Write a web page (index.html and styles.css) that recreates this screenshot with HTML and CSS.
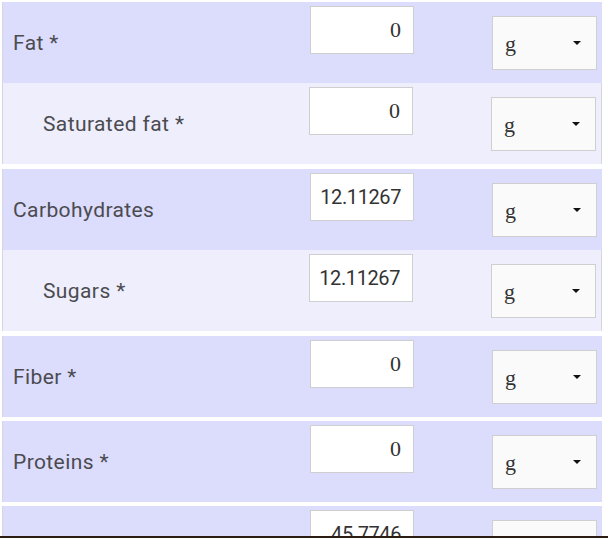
FILE: index.html
```html
<!DOCTYPE html>
<html lang="en">
<head>
<meta charset="utf-8">
<title>Nutrients</title>
<link rel="stylesheet" href="styles.css">
</head>
<body>
<div class="list">
  <div class="group has-sub">
    <div class="row main">
      <div class="label">Fat *</div>
      <input class="num serif" value="0">
      <div class="select"><span class="unit">g</span><span class="caret"></span></div>
    </div>
    <div class="row sub">
      <div class="label">Saturated fat *</div>
      <input class="num serif" value="0">
      <div class="select"><span class="unit">g</span><span class="caret"></span></div>
    </div>
  </div>
  <div class="group has-sub">
    <div class="row main">
      <div class="label">Carbohydrates</div>
      <input class="num" value="12.11267">
      <div class="select"><span class="unit">g</span><span class="caret"></span></div>
    </div>
    <div class="row sub">
      <div class="label">Sugars *</div>
      <input class="num" value="12.11267">
      <div class="select"><span class="unit">g</span><span class="caret"></span></div>
    </div>
  </div>
  <div class="group">
    <div class="row main">
      <div class="label">Fiber *</div>
      <input class="num serif" value="0">
      <div class="select"><span class="unit">g</span><span class="caret"></span></div>
    </div>
  </div>
  <div class="group">
    <div class="row main">
      <div class="label">Proteins *</div>
      <input class="num serif" value="0">
      <div class="select"><span class="unit">g</span><span class="caret"></span></div>
    </div>
  </div>
  <div class="group">
    <div class="row main">
      <div class="label">Salt *</div>
      <input class="num" value="45.7746">
      <div class="select"><span class="unit">g</span><span class="caret"></span></div>
    </div>
  </div>
</div>
<div class="frame-edge"></div>
</body>
</html>
```
FILE: styles.css
```css
html, body {
  margin: 0;
  padding: 0;
  overflow: hidden;
  background: #ffffff;
}

body {
  font-family: Roboto, "Liberation Sans", sans-serif;
}

.list {
  padding: 2px 6px 0 2px;
  display: flex;
  flex-direction: column;
  gap: 4px;
}

.group {
  display: flex;
  flex-direction: column;
}

.group.has-sub {
  padding-bottom: 1px;
}

.row {
  height: 81px;
  box-sizing: border-box;
  display: flex;
  align-items: center;
  padding: 0 5px 0 10px;
  border-left: 1px solid #d6d6e2;
}

.row.main {
  background: #dcdcfc;
}

.row.sub {
  background: #eeeefc;
  padding-left: 40px;
  border-right: 1px solid #d6d6e2;
}

.label {
  flex: 1;
  font-size: 21px;
  letter-spacing: 0.4px;
  color: #4b4b50;
  line-height: 24px;
}

.num {
  align-self: flex-start;
  margin-top: 4px;
  width: 104px;
  height: 48px;
  box-sizing: border-box;
  border: 1px solid #cfcfcf;
  background: #ffffff;
  padding: 0 12px 0 6px;
  text-align: right;
  font-family: Roboto, "Liberation Sans", sans-serif;
  font-size: 20px;
  letter-spacing: -0.4px;
  color: #333333;
  margin-right: 78px;
  outline: none;
}

.num.serif {
  font-family: "Liberation Serif", serif;
  font-size: 22px;
  letter-spacing: 0;
}

.select {
  width: 105px;
  height: 54px;
  box-sizing: border-box;
  border: 1px solid #cfcfcf;
  background: #fafafa;
  display: flex;
  align-items: center;
  justify-content: space-between;
  padding: 2px 15px 0 12px;
}

.unit {
  font-family: "Liberation Serif", serif;
  font-size: 22px;
  color: #333333;
}

.caret {
  width: 0;
  height: 0;
  border-left: 4px solid transparent;
  border-right: 4px solid transparent;
  border-top: 4px solid #111111;
  margin-top: -2px;
}

.frame-edge {
  position: fixed;
  left: 0;
  right: 0;
  bottom: 0;
  height: 2px;
  background: #2b1d14;
}
```
